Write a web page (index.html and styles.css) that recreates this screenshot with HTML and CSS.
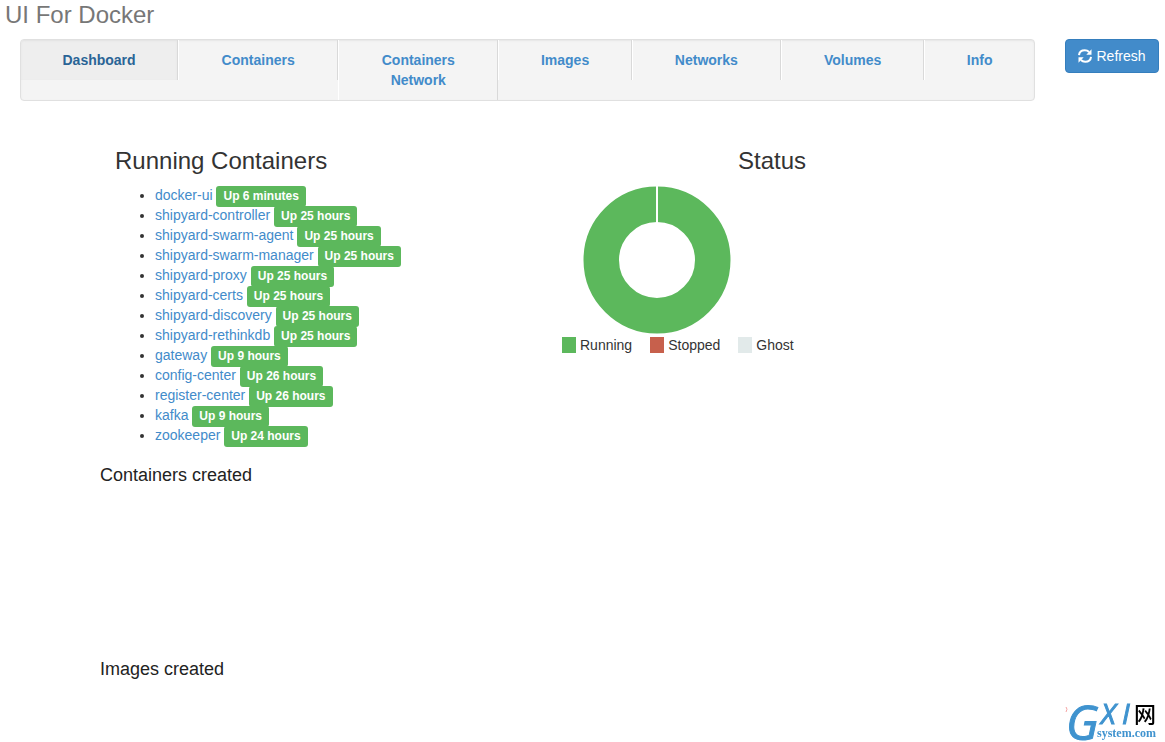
FILE: index.html
```html
<!DOCTYPE html>
<html lang="en">
<head>
<meta charset="utf-8">
<title>UI For Docker</title>
<link rel="stylesheet" href="styles.css">
</head>
<body>
<h1 class="brand">UI For Docker</h1>
<header class="masthead">
  <nav class="tabs">
    <a class="tab tab-dashboard active" href="#dashboard">Dashboard</a>
    <a class="tab tab-wide" href="#containers">Containers</a>
    <a class="tab tab-wide" href="#network">Containers<br>Network</a>
    <a class="tab tab-images" href="#images">Images</a>
    <a class="tab tab-networks" href="#networks">Networks</a>
    <a class="tab tab-volumes" href="#volumes">Volumes</a>
    <a class="tab tab-info" href="#info">Info</a>
  </nav>
  <button class="refresh" type="button">
    <svg class="refresh-icon" viewBox="0 0 14 14" aria-hidden="true">
      <path d="M1 6.200C1.300 3 3.800 1.300 6.800 1.300c1.700 0 3.200.6 4.300 1.700" fill="none" stroke="currentColor" stroke-width="2"/>
      <path d="M13.500.3v5.500H8.300z" fill="currentColor"/>
      <path d="M13 7.800c-.3 3.200-2.800 4.900-5.800 4.900-1.700 0-3.200-.6-4.300-1.700" fill="none" stroke="currentColor" stroke-width="2"/>
      <path d="M.5 13.700V8.200h5.200z" fill="currentColor"/>
    </svg>
    Refresh
  </button>
</header>
<main class="content">
  <div class="overview">
    <section>
      <h2 class="title">Running Containers</h2>
      <ul class="containers">
        <li><a href="#c1">docker-ui</a> <span class="label">Up 6 minutes</span></li>
        <li><a href="#c2">shipyard-controller</a> <span class="label">Up 25 hours</span></li>
        <li><a href="#c3">shipyard-swarm-agent</a> <span class="label">Up 25 hours</span></li>
        <li><a href="#c4">shipyard-swarm-manager</a> <span class="label">Up 25 hours</span></li>
        <li><a href="#c5">shipyard-proxy</a> <span class="label">Up 25 hours</span></li>
        <li><a href="#c6">shipyard-certs</a> <span class="label">Up 25 hours</span></li>
        <li><a href="#c7">shipyard-discovery</a> <span class="label">Up 25 hours</span></li>
        <li><a href="#c8">shipyard-rethinkdb</a> <span class="label">Up 25 hours</span></li>
        <li><a href="#c9">gateway</a> <span class="label">Up 9 hours</span></li>
        <li><a href="#c10">config-center</a> <span class="label">Up 26 hours</span></li>
        <li><a href="#c11">register-center</a> <span class="label">Up 26 hours</span></li>
        <li><a href="#c12">kafka</a> <span class="label">Up 9 hours</span></li>
        <li><a href="#c13">zookeeper</a> <span class="label">Up 24 hours</span></li>
      </ul>
    </section>
    <section>
      <h2 class="title centered">Status</h2>
      <svg class="chart" viewBox="0 0 190 150" role="img" aria-label="Container status">
        <circle cx="95" cy="75" r="55.750" fill="none" stroke="#5cb85c" stroke-width="35.500"/>
        <path d="M95 0v38" stroke="#fff" stroke-width="2"/>
      </svg>
      <div class="legend">
        <span class="key"><i class="swatch running"></i>Running</span>
        <span class="key"><i class="swatch stopped"></i>Stopped</span>
        <span class="key"><i class="swatch ghost"></i>Ghost</span>
      </div>
    </section>
  </div>
  <section class="history"><h3 class="subtitle">Containers created</h3></section>
  <section class="history"><h3 class="subtitle">Images created</h3></section>
</main>
<svg class="watermark" viewBox="0 0 100 46" role="img" aria-label="GXI system.com">
  <path d="M1 11q2 2 0 5" fill="none" stroke="#f5a3a3" stroke-width="1"/>
  <text class="mark-g" x="1" y="44">G</text>
  <text class="mark-x" x="36" y="28">X</text>
  <text class="mark-x" x="57" y="28">I</text>
  <text class="mark-net" x="69" y="26">网</text>
  <text class="mark-site" x="32" y="41">system.com</text>
</svg>
</body>
</html>
```
FILE: styles.css
```css
* { box-sizing: border-box; }
body {
  margin: 0;
  background: #fff;
  color: #333;
  font: 14px/20px "Liberation Sans", Arial, sans-serif;
}
a { color: #428bca; text-decoration: none; }
.brand {
  margin: 0;
  padding: 2px 5px 0;
  color: #777;
  font-size: 24px;
  font-weight: 400;
  line-height: 26px;
}
.masthead {
  display: flex;
  align-items: flex-start;
  gap: 30px;
  padding: 11px 6px 0 20px;
}
.tabs {
  display: flex;
  align-items: flex-start;
  flex: 1;
  border: 1px solid #e0e0e0;
  border-radius: 4px;
  background: #f4f4f4;
  box-shadow: inset 0 1px 2px #e6e6e6;
}
.tab {
  padding: 10px 0;
  border-right: 1px solid #d9d9d9;
  border-left: 1px solid #fff;
  font-weight: 700;
  text-align: center;
}
.tab:first-child { border-left: 0; border-radius: 3px 0 0 0; }
.tab:last-child { border-right: 0; }
.tab.active {
  background: #eee;
  color: #2a6496;
  box-shadow: inset 0 1px 2px #e2e2e2;
}
.tab-dashboard { flex: 158 1 0; }
.tab-wide { flex: 160 1 0; }
.tab-images { flex: 133 1 0; }
.tab-networks { flex: 149 1 0; }
.tab-volumes { flex: 143 1 0; }
.tab-info { flex: 110 1 0; }
.refresh {
  display: flex;
  align-items: center;
  justify-content: center;
  gap: 4px;
  min-width: 94px;
  padding: 6px 12px;
  border: 1px solid #357ebd;
  border-radius: 4px;
  background: #428bca;
  color: #fff;
  font: inherit;
}
.refresh-icon { width: 14px; height: 14px; }
.content { padding: 47px 168px 0 100px; }
.overview { display: grid; grid-template-columns: 447fr 450fr; }
.overview section { padding: 0 15px; }
.title {
  margin: 0 0 11px;
  color: #333;
  font-size: 24px;
  font-weight: 400;
  line-height: 26px;
}
.centered { text-align: center; }
.containers { margin: 0; padding: 0 0 0 40px; }
.label {
  padding: 3px 7px 4px;
  border-radius: 3px;
  background: #5cb85c;
  color: #fff;
  font-size: 12px;
  font-weight: 700;
  line-height: 12px;
}
.chart { display: block; width: 190px; height: 150px; }
.legend { display: flex; gap: 18px; }
.key { display: flex; align-items: center; gap: 4px; }
.swatch { width: 14px; height: 16px; }
.running { background: #5cb85c; }
.stopped { background: #c7604c; }
.ghost { background: #e2eaea; }
.history { padding-top: 20px; min-height: 194px; }
.history:last-child { min-height: 0; }
.subtitle {
  margin: 0;
  color: #222;
  font-size: 18px;
  font-weight: 400;
  line-height: 20px;
}
.watermark {
  position: fixed;
  right: 0;
  bottom: 0;
  width: 100px;
  height: 46px;
  overflow: visible;
}
.mark-g, .mark-x {
  fill: #3f93cf;
  font-family: "Open Sans", sans-serif;
  font-style: italic;
}
.mark-g { font-size: 48px; stroke: #3f93cf; stroke-width: 1; }
.mark-x { font-size: 28px; stroke: #3f93cf; stroke-width: 1; }
.mark-net { font: 500 22px "Noto Sans CJK SC", sans-serif; }
.mark-site {
  fill: #3f93cf;
  font: 700 12px "Liberation Serif", serif;
}
```
